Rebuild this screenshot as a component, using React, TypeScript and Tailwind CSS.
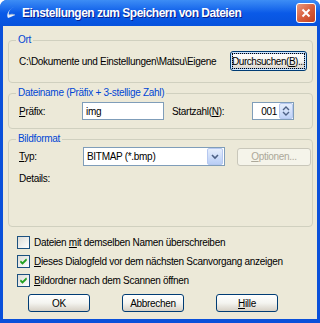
import { useState } from "react";

const font = { fontFamily: '"Liberation Sans", Arial, sans-serif' };

function XpButton({
  children,
  className = "",
  focused = false,
  disabled = false,
}: {
  children: React.ReactNode;
  className?: string;
  focused?: boolean;
  disabled?: boolean;
}) {
  if (disabled) {
    return (
      <div
        className={`flex items-center justify-center rounded-[3px] border border-[#C9C7BA] bg-[#F5F4EA] text-[#ACA899] ${className}`}
      >
        {children}
      </div>
    );
  }
  return (
    <div
      className={`flex items-center justify-center rounded-[3px] border border-[#003C74] bg-linear-to-b from-white via-[#F4F4F0] to-[#D6D0C5] text-black ${
        focused ? "p-[1px] shadow-[inset_0_0_0_1px_#CEE7FF,inset_0_0_0_2px_#98B8EA]" : ""
      } ${className}`}
    >
      {focused ? (
        <span className="flex h-full w-full items-center justify-center border border-dotted border-black tracking-[-0.45px]">
          {children}
        </span>
      ) : (
        children
      )}
    </div>
  );
}

function Group({ title, className = "", children }: { title: string; className?: string; children: React.ReactNode }) {
  return (
    <fieldset className={`ml-[5px] w-[305px] rounded-[4px] border border-[#D0D0BF] ${className}`}>
      <legend className="ml-[7px] px-[2px] text-[#0046D5] leading-[12px]">{title}</legend>
      {children}
    </fieldset>
  );
}

function CheckBox({ checked, children }: { checked: boolean; children: React.ReactNode }) {
  return (
    <div className="flex h-[13px] items-center gap-[4px] pl-[14px]">
      <div className="relative h-[13px] w-[13px] border border-[#1C5180] bg-linear-to-br from-[#DCDCD7] to-white">
        {checked && (
          <svg viewBox="0 0 11 11" className="absolute left-0 top-0 h-[11px] w-[11px]">
            <path d="M2.5 5 L4.5 7 L8.5 3 M2.5 6 L4.5 8 L8.5 4 M2.5 5.5 L4.5 7.5 L8.5 3.5" stroke="#21A121" strokeWidth="1.1" fill="none" />
          </svg>
        )}
      </div>
      <span className="leading-[13px]">{children}</span>
    </div>
  );
}

export default function App() {
  const [prefix] = useState("img");

  return (
    <div className="h-[323px] w-[320px] overflow-hidden whitespace-nowrap text-[10px] tracking-[-0.3px] text-black" style={font}>
      <div className="flex h-full w-full flex-col rounded-t-[7px] bg-[#0A50DA] px-[3px] pb-[4px]">
        {/* title bar */}
        <div className="-mx-[3px] flex h-[26px] items-center rounded-t-[7px] bg-linear-to-b from-[#3D8DF5] via-[#0A5AE8] to-[#0752DC] pl-[5px] pr-[4px]">
          <svg viewBox="0 0 14 14" className="h-[14px] w-[14px]">
            <path d="M9 1 C5 3 3 6 4 9 C6 8 8 8 10 9 C8 10 6 11 3 12 C1 9 3 4 9 1 Z" fill="#E8EEF8" />
            <path d="M4 9 C6 8 8 8 10 9" stroke="#9FB6D6" strokeWidth="1" fill="none" />
          </svg>
          <span className="ml-[3px] text-[12px] font-bold tracking-[-0.5px] text-white [text-shadow:1px_1px_0_#0A1E8C]">
            Einstellungen zum Speichern von Dateien
          </span>
          <div className="ml-auto flex h-[20px] w-[20px] items-center justify-center rounded-[3px] border border-white bg-linear-to-br from-[#E8977E] via-[#D9603E] to-[#C2401F]">
            <svg viewBox="0 0 10 10" className="h-[10px] w-[10px]">
              <path d="M1.5 1.5 L8.5 8.5 M8.5 1.5 L1.5 8.5" stroke="white" strokeWidth="2" />
            </svg>
          </div>
        </div>

        {/* body */}
        <div className="flex flex-1 flex-col bg-[#ECE9D8] pt-[8px]">
          <Group title="Ort" className="h-[49px]">
            <div className="flex items-center pl-[10px] pr-[5px] pt-[5px]">
              <span>C:\Dokumente und Einstellungen\Matsu\Eigene</span>
              <XpButton focused className="ml-auto h-[20px] w-[77px]">
                <span>
                  Durchsuchen(<u>B</u>)...
                </span>
              </XpButton>
            </div>
          </Group>

          <Group title="Dateiname (Präfix + 3-stellige Zahl)" className="mt-[4px] h-[42px]">
            <div className="flex items-center pl-[10px] pt-[3px]">
              <span className="w-[63px]">
                <u>P</u>räfix:
              </span>
              <div className="flex h-[18px] w-[82px] items-center border border-[#7F9DB9] bg-white px-[3px]">{prefix}</div>
              <span className="ml-[8px] w-[80px]">
                Startzahl(<u>N</u>):
              </span>
              <div className="flex h-[18px] w-[42px] items-center border border-[#7F9DB9] bg-white pl-[2px]">
                <span className="flex-1 pr-[2px] text-right">001</span>
                <div className="flex h-[16px] w-[14px] flex-col items-center justify-center rounded-[2px] border border-[#B6C8F0] bg-linear-to-b from-[#E6EEFC] to-[#BFD2F7]">
                  <svg viewBox="0 0 8 12" className="h-[12px] w-[8px]">
                    <path d="M1 5 L4 2 L7 5 M1 7 L4 10 L7 7" stroke="#4D6185" strokeWidth="1.4" fill="none" />
                  </svg>
                </div>
              </div>
            </div>
          </Group>

          <Group title="Bildformat" className="mt-[4px] h-[94px]">
            <div className="flex items-center pl-[10px] pt-[2px]">
              <span className="w-[64px]">
                <u>T</u>yp:
              </span>
              <div className="flex h-[19px] w-[142px] items-center border border-[#7F9DB9] bg-white pl-[3px]">
                <span className="flex-1">BITMAP (*.bmp)</span>
                <div className="mr-[1px] flex h-[17px] w-[16px] items-center justify-center rounded-[2px] border border-[#B6C8F0] bg-linear-to-b from-[#E6EEFC] to-[#B9CEF6]">
                  <svg viewBox="0 0 8 6" className="h-[6px] w-[8px]">
                    <path d="M1 1 L4 4 L7 1" stroke="#4D6185" strokeWidth="1.6" fill="none" />
                  </svg>
                </div>
              </div>
              <XpButton disabled className="ml-[12px] h-[18px] w-[74px]">
                <span>
                  <u>O</u>ptionen...
                </span>
              </XpButton>
            </div>
            <div className="pl-[10px] pt-[5px]">Details:</div>
          </Group>

          <div className="mt-[9px] flex flex-col gap-[6px]">
            <CheckBox checked={false}>
              Dateien <u>m</u>it demselben Namen überschreiben
            </CheckBox>
            <CheckBox checked>
              <u>D</u>ieses Dialogfeld vor dem nächsten Scanvorgang anzeigen
            </CheckBox>
            <CheckBox checked>
              <u>B</u>ildordner nach dem Scannen öffnen
            </CheckBox>
          </div>

          <div className="mt-[7px] flex gap-[32px] pl-[25px]">
            <XpButton className="h-[18px] w-[62px]">OK</XpButton>
            <XpButton className="h-[18px] w-[62px]">Abbrechen</XpButton>
            <XpButton className="h-[18px] w-[62px]">
              <span>
                <u>H</u>ille
              </span>
            </XpButton>
          </div>
        </div>
      </div>
    </div>
  );
}
